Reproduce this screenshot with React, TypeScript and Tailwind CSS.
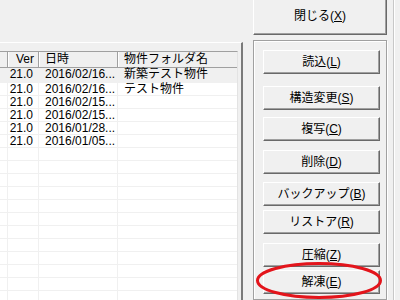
import React from "react";

const rows: [string, string, string][] = [
  ["21.0", "2016/02/16...", "新築テスト物件"],
  ["21.0", "2016/02/16...", "テスト物件"],
  ["21.0", "2016/02/15...", ""],
  ["21.0", "2016/02/15...", ""],
  ["21.0", "2016/01/28...", ""],
  ["21.0", "2016/01/05...", ""],
];

function Label({ text, k }: { text: string; k: string }) {
  return (
    <span>
      {text}(<span className="underline underline-offset-1">{k}</span>)
    </span>
  );
}

function Btn({ text, k, mt }: { text: string; k: string; mt: string }) {
  return (
    <div
      className={`${mt} ml-[9px] w-[117px] h-[24px] flex items-center justify-center bg-[#f0f0f0] border border-t-white border-l-white border-r-[#696969] border-b-[#696969] shadow-[inset_-1px_-1px_0_#a0a0a0] text-[12px] text-black`}
    >
      <Label text={text} k={k} />
    </div>
  );
}

export default function App() {
  const all = Array.from({ length: 18 }, (_, i) => rows[i] ?? ["", "", ""]);
  return (
    <div className="relative w-[400px] h-[300px] overflow-hidden bg-[#f0f0f0] flex [font-family:'Liberation_Sans','Noto_Sans_CJK_JP',sans-serif] text-black">
      {/* left list area */}
      <div className="w-[243px] shrink-0 pt-[42px] flex flex-col">
        <div className="flex-1 border-t border-t-white border-r-2 border-r-[#7a7a7a] pt-[8px] pr-[3px] flex flex-col">
          <div className="flex-1 bg-white border-t border-t-[#a0a0a0] border-r border-r-[#e3e3e3] flex flex-col">
            {/* header */}
            <div className="flex h-[16px] bg-[#f0f0f0] border-b border-b-[#a0a0a0] text-[12px] leading-[15px]">
              <div className="w-[8px] border-r border-r-[#a0a0a0] shadow-[1px_0_0_#fff]" />
              <div className="w-[31px] border-r border-r-[#a0a0a0] shadow-[1px_0_0_#fff] text-right pr-[4px]">Ver</div>
              <div className="w-[79px] border-r border-r-[#a0a0a0] shadow-[1px_0_0_#fff] pl-[6px]">日時</div>
              <div className="flex-1 pl-[6px]">物件フォルダ名</div>
            </div>
            {/* rows */}
            {all.map((r, i) => (
              <div
                key={i}
                className={`flex shrink-0 border-b border-b-[#f0f0f0] text-[12px] ${i === 0 ? "h-[15px] bg-[#f0f0f0] items-center" : "h-[13px] items-center"}`}
              >
                <div className="w-[8px] h-full border-r border-r-[#f0f0f0]" />
                <div className="w-[31px] h-full border-r border-r-[#f0f0f0] text-right pr-[5px] leading-[13px]">{r[0]}</div>
                <div className="w-[79px] h-full border-r border-r-[#f0f0f0] pl-[6px] leading-[13px]">{r[1]}</div>
                <div className="flex-1 h-full pl-[6px] leading-[13px]">{r[2]}</div>
              </div>
            ))}
          </div>
        </div>
      </div>

      {/* right buttons area */}
      <div className="flex-1 flex pl-[10px]">
        <div className="w-[134px] flex flex-col">
          <div className="-mt-[3px] h-[38px] flex items-center justify-center bg-[#f0f0f0] border border-t-white border-l-white border-r-[#696969] border-b-[#696969] shadow-[inset_-1px_-1px_0_#a0a0a0] text-[12px]">
            <Label text="閉じる" k="X" />
          </div>
          <div className="mt-[5px] flex-1 border border-[#a0a0a0] shadow-[inset_1px_1px_0_#fff,1px_1px_0_#fff] pt-[9px] flex flex-col">
            <Btn text="読込" k="L" mt="mt-0" />
            <Btn text="構造変更" k="S" mt="mt-[12px]" />
            <Btn text="複写" k="C" mt="mt-[7px]" />
            <Btn text="削除" k="D" mt="mt-[9px]" />
            <Btn text="バックアップ" k="B" mt="mt-[8px]" />
            <Btn text="リストア" k="R" mt="mt-[4px]" />
            <Btn text="圧縮" k="Z" mt="mt-[9px]" />
            <Btn text="解凍" k="E" mt="mt-[3px]" />
          </div>
        </div>
        <div className="ml-[6px] w-px bg-[#c8c8c8] shadow-[1px_0_0_#fff]" />
      </div>

      {/* red highlight ellipse */}
      <svg
        className="absolute left-[255px] top-[261px]"
        width="128"
        height="39"
        viewBox="0 0 128 39"
      >
        <ellipse cx="64" cy="19.5" rx="61.5" ry="17" fill="none" stroke="#e3141b" strokeWidth="3" />
      </svg>
    </div>
  );
}
